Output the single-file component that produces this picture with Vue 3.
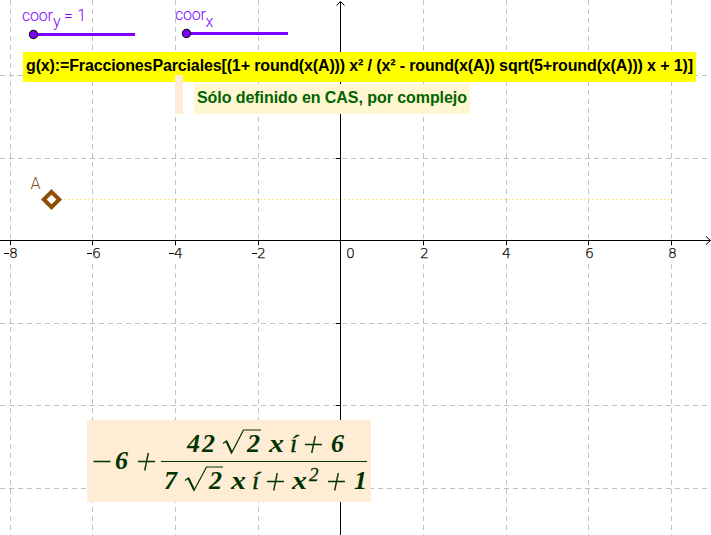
<script setup>
const vertical = [
  { x: 10, label: '8', tx: 9, minus: true },
  { x: 92, label: '6', tx: 92, minus: true },
  { x: 175, label: '4', tx: 174, minus: true },
  { x: 258, label: '2', tx: 257, minus: true },
  { x: 423, label: '2', tx: 420 },
  { x: 506, label: '4', tx: 502 },
  { x: 588, label: '6', tx: 585 },
  { x: 671, label: '8', tx: 668 }
]
const horizontal = [75, 158, 323, 405, 488]
const negatives = vertical.filter((l) => l.minus)
</script>

<template>
  <svg class="board" width="711" height="535" viewBox="0 0 711 535">
    <g class="grid">
      <path v-for="l in vertical" :key="l.x" :d="`M${l.x + 0.5} 0V246M${l.x + 0.5} 264V535`" />
      <path v-for="y in horizontal" :key="y" :d="`M0 ${y + 0.5}H711`" />
    </g>

    <path class="locus" d="M52 199.5H671" />

    <g class="axis">
      <path d="M0 240.5H710M340.5 2V535" />
      <path v-for="l in vertical" :key="l.x" :d="`M${l.x + 0.5} 241V245`" />
      <path v-for="y in horizontal" :key="y" :d="`M336 ${y + 0.5}H340`" />
      <path class="arrow" d="M706 236.5L710.5 240.5L706 244.5M336.5 5.5L340.5 1.5L344.5 5.5" />
      <path v-for="l in negatives" :key="l.tx" :d="`M${l.tx - 5} 253.5h5`" />
    </g>
    <g class="ticks">
      <text v-for="l in vertical" :key="l.x" :x="l.tx" y="258">{{ l.label }}</text>
      <text x="346" y="258">0</text>
    </g>

    <path class="diamond" d="M51.5 191.8L59.2 199.5L51.5 207.2L43.8 199.5Z" />
    <text class="point-label" x="30.5" y="189">A</text>

    <g class="slider">
      <path d="M33 34.5H135M186 33.5H288" />
      <circle cx="33.5" cy="34.5" r="4.1" />
      <circle cx="186.5" cy="33.5" r="4.1" />
      <text x="22" y="21" textLength="31">coor</text>
      <text x="53" y="27">y</text>
      <text x="64" y="21" textLength="22">= 1</text>
      <text x="175" y="20" textLength="31">coor</text>
      <text x="205.5" y="27">x</text>
    </g>

    <rect class="yellow" x="23" y="52" width="673" height="30" />
    <text class="command" x="26" y="71" textLength="667">g(x):=FraccionesParciales[(1+ round(x(A))) x² / (x² - round(x(A)) sqrt(5+round(x(A))) x + 1)]</text>
    <rect class="peach" x="175" y="75" width="8" height="39" />
    <rect class="cream" x="194" y="84" width="276" height="30" />
    <text class="note" x="197" y="103" textLength="270">Sólo definido en CAS, por complejo</text>

    <rect class="peach" x="87" y="420" width="284" height="82" />
    <g class="formula">
      <path d="M93.5 461.5H110.5M138 461.5H155M148.3 453L144.7 470.5" />
      <text x="115" y="469" textLength="14">6</text>
      <path class="bar" d="M161 461.5H367" />
      <text x="187" y="452" textLength="28">42</text>
      <path class="root" d="M223 443.5L226.5 441L231.5 453L243.5 430H261" />
      <path class="stem" d="M226.5 441.5L231.5 452" />
      <text x="247" y="452" textLength="14">2</text>
      <text class="letter" x="269" y="452" textLength="15" lengthAdjust="spacingAndGlyphs">x</text>
      <text class="iota" x="290" y="452">í</text>
      <path d="M305 444.5H322M315.3 436L311.7 453" />
      <text x="331" y="452" textLength="14">6</text>
      <text x="164" y="489" textLength="14">7</text>
      <path class="root" d="M185 480.5L188.5 478L194 490.5L206.5 467H223" />
      <path class="stem" d="M188.5 478.5L194 489.5" />
      <text x="209" y="489" textLength="14">2</text>
      <text class="letter" x="231" y="489" textLength="15" lengthAdjust="spacingAndGlyphs">x</text>
      <text class="iota" x="252" y="489">í</text>
      <path d="M267 481.5H284M277.3 473L273.7 490.5" />
      <text class="letter" x="292" y="489" textLength="15" lengthAdjust="spacingAndGlyphs">x</text>
      <text class="power" x="309" y="481" textLength="10">2</text>
      <path d="M328 481.5H345M338.3 473L334.7 490.5" />
      <text x="354" y="489" textLength="12">1</text>
    </g>
  </svg>
</template>

<style>
body { margin: 0; background: #fff; }
</style>
<style scoped>
.board { display: block; font-family: "Liberation Sans", Arial, sans-serif; }
.grid path { stroke: #c0c0c0; stroke-width: 1; stroke-dasharray: 5 4; fill: none; }
.axis path { stroke: #000; stroke-width: 1; fill: none; }
.ticks text { font: 200 14px "DejaVu Sans", sans-serif; fill: #000; stroke: #000; stroke-width: 0.25; }
.locus { stroke: #f8e78a; stroke-width: 1; stroke-dasharray: 2 2; }
.diamond { stroke: #8f4e05; stroke-width: 4; fill: #fff; }
.point-label { font: 300 16px Roboto, sans-serif; fill: #7d541b; }
.slider path { stroke: #7d00ff; stroke-width: 3; }
.slider circle { fill: #7d00ff; stroke: #111; stroke-width: 1.2; }
.slider text { font: 300 16px Roboto, sans-serif; fill: #7d00ff; }
.yellow { fill: #ff0; }
.peach { fill: #ffecd4; }
.cream { fill: #fff7d2; }
.command, .note { font-size: 16px; font-weight: bold; fill: #000; }
.note { fill: #006400; }
.formula text { font: italic bold 26px "Liberation Serif", serif; fill: #003300; }
.formula .iota { font-weight: normal; stroke: #003300; stroke-width: 0.4; }
.formula .power { font-size: 19px; font-weight: normal; stroke: #003300; stroke-width: 0.3; }
.formula path { stroke: #003300; stroke-width: 1.4; fill: none; }
.formula .bar { stroke-width: 1; }
.formula .root { stroke-width: 1.2; }
.formula .stem { stroke-width: 2; }
</style>
